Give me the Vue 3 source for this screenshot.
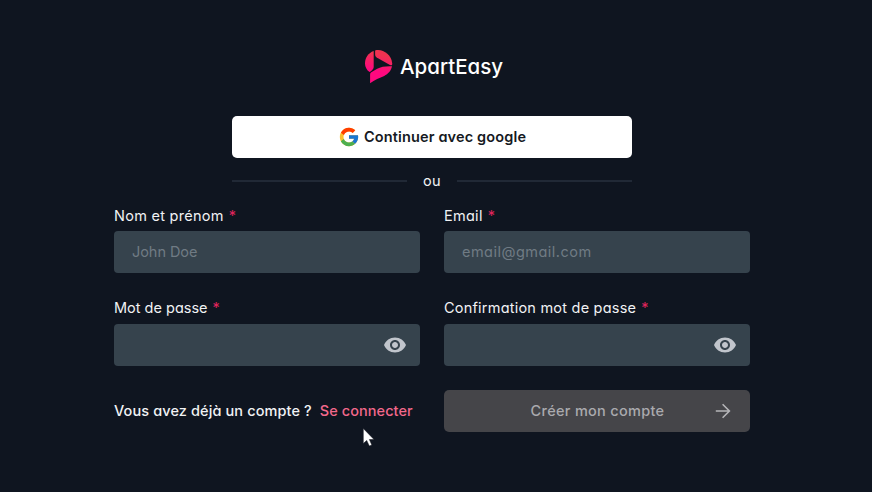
<script setup>
import { ref } from 'vue'

const fields = ref([
  { id: 'name', label: 'Nom et prénom', type: 'text', placeholder: 'John Doe', value: '' },
  { id: 'email', label: 'Email', type: 'email', placeholder: 'email@gmail.com', value: '' },
  { id: 'password', label: 'Mot de passe', type: 'password', placeholder: '', value: '' },
  { id: 'confirm', label: 'Confirmation mot de passe', type: 'password', placeholder: '', value: '' },
])
</script>

<template>
  <main class="page">
    <header class="brand">
      <svg class="logo" viewBox="0 0 28 34" width="28" height="34">
        <defs>
          <linearGradient id="brand-fill" gradientUnits="userSpaceOnUse" x1="16" y1="0" x2="9" y2="32">
            <stop offset="0.15" stop-color="#f03250" />
            <stop offset="0.65" stop-color="#ff087f" />
          </linearGradient>
        </defs>
        <g fill="url(#brand-fill)">
          <path d="M8.700 1V17.200C8.400 19.200 6.400 21 4.600 22C1.700 20 0 16.800 0 13.400C0 7.800 3.400 2.800 8.700 1Z" />
          <path d="M10.100.5C17.600-1.500 26.200 4.500 27.200 13.200C27.400 15.200 26.500 15.600 25 14.900L11.700 7.500C10.400 6.700 10.100 5.400 10.100 4Z" />
          <path d="M5.100 33.300V24.800C5.100 23.400 5.600 22.800 6.700 22.100L12.200 18.800C15.700 16.700 21.600 16 27 16.300C26.200 20.500 23.200 24 19.200 25.900C14.800 28 9.500 29.600 5.100 33.300Z" />
        </g>
      </svg>
      <span class="brand-name">ApartEasy</span>
    </header>

    <button class="google" type="button">
      <svg viewBox="0 0 48 48" width="22" height="22">
        <path fill="#fbc02d" d="M43.6 20.1H42V20H24v8h11.3C33.7 32.7 29.2 36 24 36c-6.6 0-12-5.4-12-12s5.4-12 12-12c3.1 0 5.8 1.2 8 3l5.7-5.7C34 6.1 29.3 4 24 4 13 4 4 13 4 24s9 20 20 20 20-9 20-20c0-1.300-.1-2.600-.4-3.900z" />
        <path fill="#ff3d00" d="m6.300 14.700 6.600 4.800C14.700 15.100 19 12 24 12c3.100 0 5.800 1.200 8 3l5.700-5.700C34 6.100 29.300 4 24 4 16.300 4 9.700 8.300 6.300 14.700z" />
        <path fill="#4caf50" d="M24 44c5.200 0 9.900-2 13.400-5.200l-6.200-5.200C29.200 35.100 26.700 36 24 36c-5.200 0-9.600-3.300-11.300-7.900l-6.500 5C9.500 39.600 16.200 44 24 44z" />
        <path fill="#1976d2" d="M43.600 20.100H42V20H24v8h11.300c-.8 2.200-2.200 4.200-4.100 5.600l6.200 5.200C37 39.200 44 34 44 24c0-1.300-.1-2.600-.4-3.900z" />
      </svg>
      <span class="google-label">Continuer avec google</span>
    </button>

    <div class="divider"><span class="rule"></span><span class="or">ou</span><span class="rule"></span></div>

    <form class="form" @submit.prevent>
      <div v-for="field in fields" :key="field.id" class="field">
        <label :for="field.id" :class="['label', field.id]"><span class="label-text">{{ field.label }}</span><span class="star">*</span></label>
        <div class="control">
          <input :id="field.id" v-model="field.value" :class="field.id" :type="field.type" :placeholder="field.placeholder" />
          <svg v-if="field.type === 'password'" class="eye" viewBox="0 0 24 24" width="24" height="24">
            <path fill="#c1c5cc" d="M12 4.500C7 4.500 2.730 7.610 1 12c1.730 4.390 6 7.500 11 7.500s9.270-3.110 11-7.500c-1.730-4.390-6-7.500-11-7.500zM12 17c-2.760 0-5-2.240-5-5s2.240-5 5-5 5 2.240 5 5-2.240 5-5 5zm0-8c-1.660 0-3 1.340-3 3s1.340 3 3 3 3-1.340 3-3-1.340-3-3-3z" />
          </svg>
        </div>
      </div>
      <p class="signin"><span class="question">Vous avez déjà un compte ?</span><a class="link">Se connecter</a></p>
      <button class="submit" type="submit">
        <span class="submit-label">Créer mon compte</span>
        <svg viewBox="0 0 16 16" width="16" height="16" fill="none" stroke="#b5b5b8" stroke-width="1.6">
          <path d="M.8 8H14.400M7.600 1.200L14.400 8L7.600 14.800" />
        </svg>
      </button>
    </form>

    <svg class="cursor" viewBox="0 0 12 19" width="12" height="19">
      <path fill="#fff" stroke="#10131d" stroke-width=".5" d="M.3.500V15.600L3.700 12.400L6.300 18L8.800 16.900L6.400 11.500H11Z" />
    </svg>
  </main>
</template>

<style>
body { background: #0f1520; }
</style>

<style scoped>
.page {
  box-sizing: border-box;
  position: relative;
  display: flex;
  flex-direction: column;
  align-items: center;
  width: 872px;
  height: 492px;
  padding: 50px 8px 0 0;
  overflow: hidden;
  background: #0f1520;
  color: #f1f2f4;
  font: 400 14.5px/20px Inter, "Liberation Sans", sans-serif;
  font-feature-settings: "cv11";
  white-space: nowrap;
}
button, input { font: inherit; font-feature-settings: inherit; border: 0; margin: 0; }
svg { display: block; flex: none; }
.brand { display: flex; align-items: center; width: 134px; height: 34px; gap: 7px; }
.brand-name { font-size: 20.5px; font-weight: 500; color: #fff; letter-spacing: 0; }
.google {
  display: flex;
  align-items: center;
  box-sizing: border-box;
  width: 400px;
  height: 42px;
  margin-top: 32px;
  padding: 0 0 0 106px;
  gap: 4px;
  border-radius: 5px;
  background: #fff;
  color: #151922;
  font-weight: 600;
  letter-spacing: 0.14px;
}
.divider {
  display: flex;
  align-items: center;
  justify-content: space-between;
  width: 400px;
  height: 20px;
  margin-top: 13px;
}
.or { letter-spacing: 0.3px; }
.rule { width: 175px; height: 2px; background: #212936; }
.form {
  display: grid;
  grid-template-columns: 306px 306px;
  grid-template-rows: 68px 68px 42px;
  column-gap: 24px;
  row-gap: 24px;
  margin-top: 15px;
}
.label { display: flex; height: 20px; gap: 5px; margin-bottom: 5px; letter-spacing: 0.27px; }
.field:nth-child(n + 3) .label { margin-bottom: 6px; }
.label.password { letter-spacing: 0; }
.label.confirm { letter-spacing: 0.22px; }
.star { color: #e0245c; }
.control {
  box-sizing: border-box;
  display: flex;
  align-items: center;
  height: 42px;
  padding: 0 13px 0 18px;
  border-radius: 4px;
  background: #36434d;
}
input { flex: 1; min-width: 0; padding: 0; outline: 0; background: transparent; color: #f1f2f4; }
input.name { letter-spacing: -0.05px; }
input.email { letter-spacing: 0.48px; }
input::placeholder { color: #707b84; opacity: 1; }
.signin { display: flex; align-items: center; gap: 8px; margin: 0; font-weight: 500; }
.question { letter-spacing: 0.11px; }
.link { color: #f2688b; letter-spacing: 0.06px; }
.submit {
  display: grid;
  grid-template-columns: 1fr 16px;
  align-items: center;
  padding: 0 19px 0 51px;
  column-gap: 15px;
  border-radius: 5px;
  background: #454549;
  color: #aaaaae;
  font-weight: 500;
  letter-spacing: 0.3px;
}
.cursor { position: absolute; left: 363px; top: 428px; }
</style>
